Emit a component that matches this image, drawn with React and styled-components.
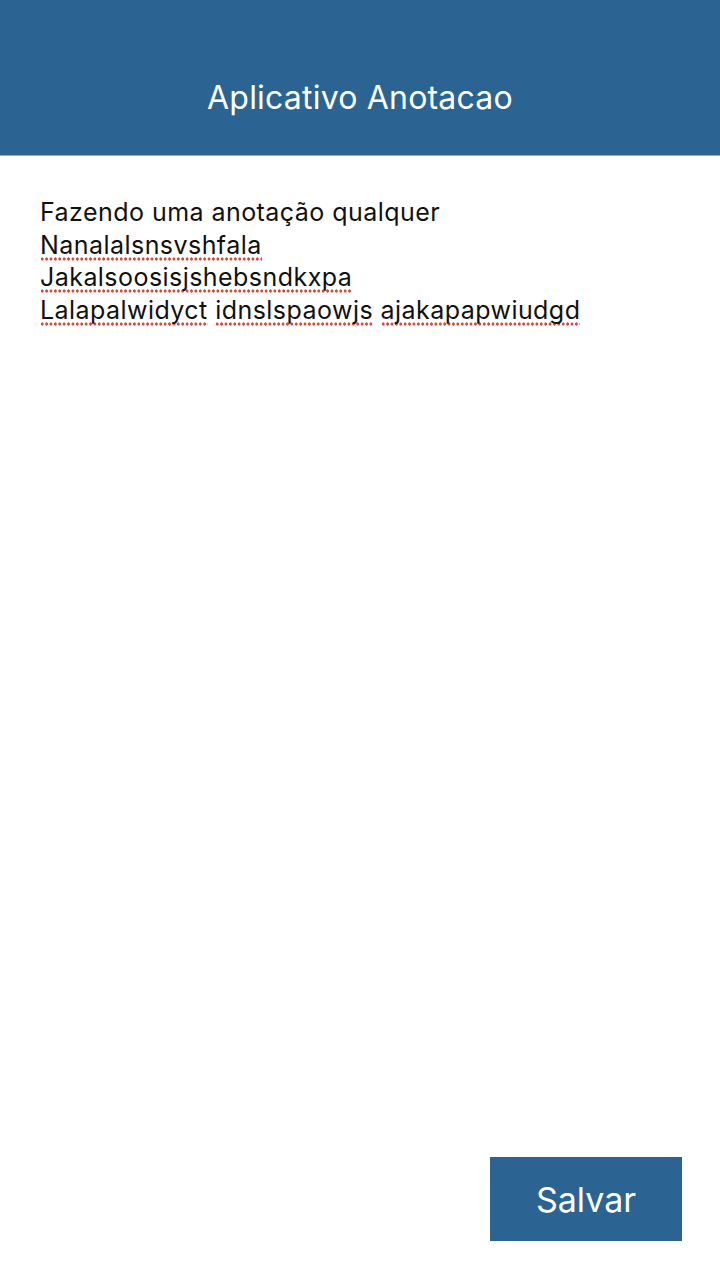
import React from 'react';
import styled, { createGlobalStyle } from 'styled-components';

const GlobalStyle = createGlobalStyle`
  html, body {
    margin: 0;
    padding: 0;
    background: #fff;
  }
  body {
    font-family: Inter, 'Liberation Sans', Arial, sans-serif;
  }
`;

const lines = [
  { text: 'Fazendo uma anotação qualquer', words: [] },
  { words: ['Nanalalsnsvshfala'] },
  { words: ['Jakalsoosisjshebsndkxpa'] },
  { words: ['Lalapalwidyct', 'idnslspaowjs', 'ajakapapwiudgd'] }
];

export default function App() {
  return (
    <React.Fragment>
      <GlobalStyle />
      <Screen>
        <Header>
          <Title>Aplicativo Anotacao</Title>
        </Header>
        <Note>
          {lines.map((line, i) => (
            <Line key={i}>
              {line.text
                ? line.text
                : line.words.map((w, j) => (
                    <React.Fragment key={j}>
                      {j > 0 && ' '}
                      <Misspelled>{w}</Misspelled>
                    </React.Fragment>
                  ))}
            </Line>
          ))}
        </Note>
        <SaveButton>Salvar</SaveButton>
      </Screen>
    </React.Fragment>
  );
}

const Screen = styled.div`
  min-height: 100vh;
  display: flex;
  flex-direction: column;
`;

const Header = styled.header`
  height: 156px;
  box-sizing: border-box;
  background: #2b6493;
  border-bottom: 1px solid #8eaecb;
  display: flex;
  align-items: center;
  justify-content: center;
  padding-top: 40px;
`;

const Title = styled.h1`
  margin: 0;
  color: #fff;
  font-weight: normal;
  font-size: 32px;
  letter-spacing: 0.2px;
`;

const Note = styled.div`
  padding: 40px 40px 0;
  color: #111;
  font-size: 25px;
  letter-spacing: 0.45px;
  line-height: 32.5px;
`;

const Line = styled.div``;

const Misspelled = styled.span`
  padding-bottom: 1px;
  background-image: radial-gradient(circle, #d9463c 1.4px, transparent 1.8px);
  background-size: 4.4px 4px;
  background-repeat: repeat-x;
  background-position: 0 100%;
`;

const SaveButton = styled.button`
  margin-top: auto;
  align-self: flex-end;
  margin-right: 38px;
  margin-bottom: 39px;
  width: 192px;
  height: 84px;
  border: none;
  background: #2b6493;
  color: #fff;
  font-family: Inter, 'Liberation Sans', Arial, sans-serif;
  font-size: 34px;
  padding: 0;
`;
